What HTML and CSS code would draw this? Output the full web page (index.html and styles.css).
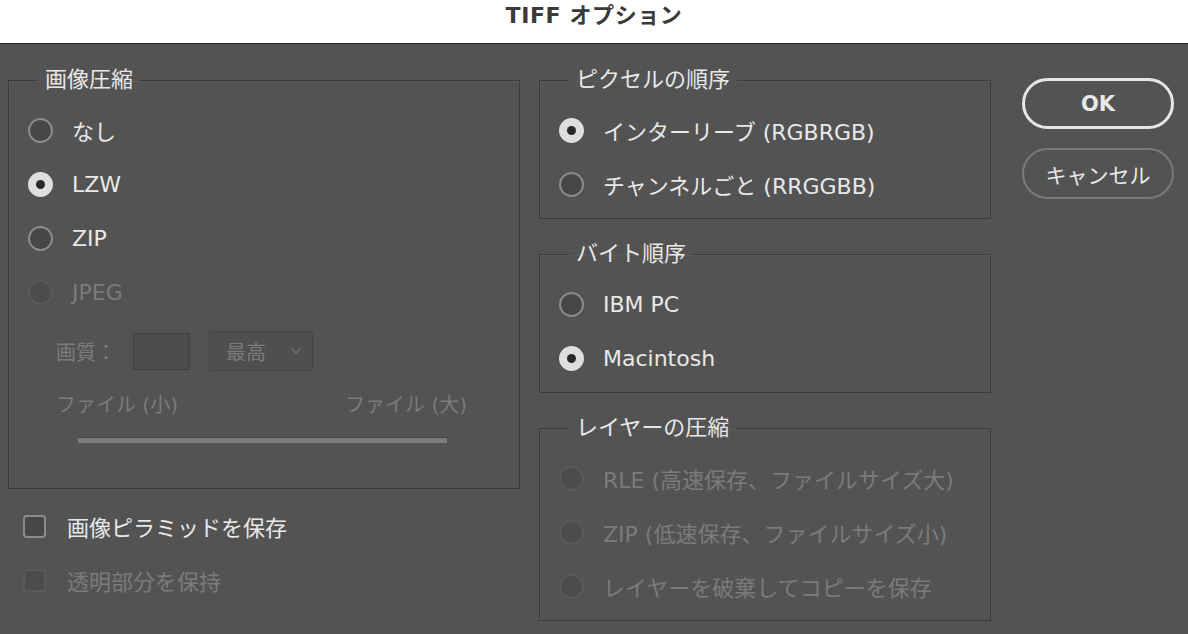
FILE: index.html
```html
<!DOCTYPE html>
<html lang="ja">
<head>
<meta charset="utf-8">
<title>TIFF オプション</title>
<link rel="stylesheet" href="styles.css">
</head>
<body>
<div class="titlebar">TIFF オプション</div>
<div class="content">
  <div class="col-left">
    <fieldset class="group">
      <legend>画像圧縮</legend>
      <div class="opt"><span class="radio"></span><span class="lbl">なし</span></div>
      <div class="opt"><span class="radio checked"></span><span class="lbl">LZW</span></div>
      <div class="opt"><span class="radio"></span><span class="lbl">ZIP</span></div>
      <div class="opt disabled"><span class="radio"></span><span class="lbl">JPEG</span></div>
      <div class="quality">
        <span class="q-label">画質：</span>
        <span class="q-input"></span>
        <span class="q-select"><span>最高</span>
          <svg class="chev" width="12" height="8" viewBox="0 0 12 8"><path d="M1.5 1.5 L6 6 L10.5 1.5" fill="none" stroke="#6f6f6f" stroke-width="1.5"/></svg>
        </span>
      </div>
      <div class="file-labels"><span>ファイル (小)</span><span>ファイル (大)</span></div>
      <div class="slider"></div>
    </fieldset>
    <div class="check"><span class="box"></span><span class="lbl">画像ピラミッドを保存</span></div>
    <div class="check disabled"><span class="box"></span><span class="lbl">透明部分を保持</span></div>
  </div>
  <div class="col-mid">
    <fieldset class="group tight">
      <legend>ピクセルの順序</legend>
      <div class="opt"><span class="radio checked"></span><span class="lbl">インターリーブ (RGBRGB)</span></div>
      <div class="opt"><span class="radio"></span><span class="lbl">チャンネルごと (RRGGBB)</span></div>
    </fieldset>
    <fieldset class="group tight">
      <legend>バイト順序</legend>
      <div class="opt"><span class="radio"></span><span class="lbl">IBM PC</span></div>
      <div class="opt"><span class="radio checked"></span><span class="lbl">Macintosh</span></div>
    </fieldset>
    <fieldset class="group tight">
      <legend>レイヤーの圧縮</legend>
      <div class="opt disabled"><span class="radio"></span><span class="lbl">RLE (高速保存、ファイルサイズ大)</span></div>
      <div class="opt disabled"><span class="radio"></span><span class="lbl">ZIP (低速保存、ファイルサイズ小)</span></div>
      <div class="opt disabled"><span class="radio"></span><span class="lbl">レイヤーを破棄してコピーを保存</span></div>
    </fieldset>
  </div>
  <div class="col-buttons">
    <button class="btn primary">OK</button>
    <button class="btn">キャンセル</button>
  </div>
</div>
</body>
</html>
```

FILE: styles.css
```css
* { box-sizing: border-box; }
html, body {
  margin: 0;
  padding: 0;
  width: 1188px;
  height: 634px;
  overflow: hidden;
  background: #535353;
  font-family: "DejaVu Sans", "Noto Sans CJK JP", sans-serif;
  color: #e8e8e8;
}
.titlebar {
  height: 44px;
  background: #ffffff;
  border-bottom: 1px solid #262626;
  color: #3a3a3a;
  font-weight: bold;
  font-size: 22px;
  line-height: 32px;
  text-align: center;
  letter-spacing: 0.6px;
}
.content {
  display: flex;
  padding: 25px 0 0 8px;
}
.col-left { width: 512px; }
.col-mid {
  width: 452px;
  margin-left: 19px;
  display: flex;
  flex-direction: column;
  gap: 24px;
}
.col-buttons {
  width: 152px;
  margin-left: 31px;
  padding-top: 9px;
  display: flex;
  flex-direction: column;
  gap: 19px;
}
.group {
  margin: 0;
  padding: 12px 19px 0 19px;
  border: 1px solid #3b3b3b;
  box-shadow: inset 1px 1px 0 #5a5a5a;
  min-width: 0;
}
.group.tight { padding-bottom: 7px; }
.group legend {
  margin-left: 10px;
  padding: 0 7px;
  font-size: 22px;
  line-height: 22px;
  color: #e8e8e8;
}
.opt {
  height: 54px;
  display: flex;
  align-items: center;
  font-size: 22px;
}
.opt .lbl { margin-left: 19px; }
.radio {
  width: 25px;
  height: 25px;
  border-radius: 50%;
  border: 2px solid #8b8b8b;
  background: #474747;
  flex: none;
  display: flex;
  align-items: center;
  justify-content: center;
}
.radio.checked {
  border-color: #dedede;
  background: #dedede;
}
.radio.checked::after {
  content: "";
  width: 9px;
  height: 9px;
  border-radius: 50%;
  background: #2a2a2a;
}
.disabled { color: #7b7b7b; }
.disabled .radio {
  border-color: #5a5a5a;
  background: #4c4c4c;
}
.quality {
  margin-top: 12px;
  padding-left: 28px;
  height: 40px;
  display: flex;
  align-items: center;
  color: #7b7b7b;
  font-size: 20px;
}
.q-input {
  width: 57px;
  height: 37px;
  margin-left: 17px;
  border: 1px solid #404040;
  background: #4d4d4d;
}
.q-select {
  width: 104px;
  height: 40px;
  margin-left: 19px;
  border: 1px solid #454545;
  border-radius: 3px;
  background: #4f4f4f;
  display: flex;
  align-items: center;
  justify-content: space-between;
  padding: 0 10px 0 16px;
}
.chev { display: block; }
.file-labels {
  margin-top: 20px;
  height: 24px;
  display: flex;
  justify-content: space-between;
  align-items: center;
  padding: 0 33px 0 28px;
  font-size: 20px;
  color: #7b7b7b;
}
.slider {
  margin: 22px 0 45px 50px;
  width: 369px;
  height: 6px;
  background: #7c7c7c;
  border-top: 1px solid #454545;
}
.check {
  height: 54px;
  display: flex;
  align-items: center;
  padding-left: 15px;
  font-size: 22px;
}
.check:first-of-type { margin-top: 10px; }
.check .lbl { margin-left: 21px; }
.box {
  width: 23px;
  height: 23px;
  border: 2px solid #8b8b8b;
  border-radius: 4px;
  background: #474747;
  flex: none;
}
.check.disabled .box {
  border-color: #5a5a5a;
  background: #4c4c4c;
}
.btn {
  height: 51px;
  width: 152px;
  border-radius: 26px;
  border: 2px solid #7a7a7a;
  background: transparent;
  color: #e8e8e8;
  font-family: "DejaVu Sans", "Noto Sans CJK JP", sans-serif;
  font-size: 21px;
  padding: 0;
}
.btn.primary {
  border: 3px solid #e6e6e6;
  font-weight: bold;
}
```
